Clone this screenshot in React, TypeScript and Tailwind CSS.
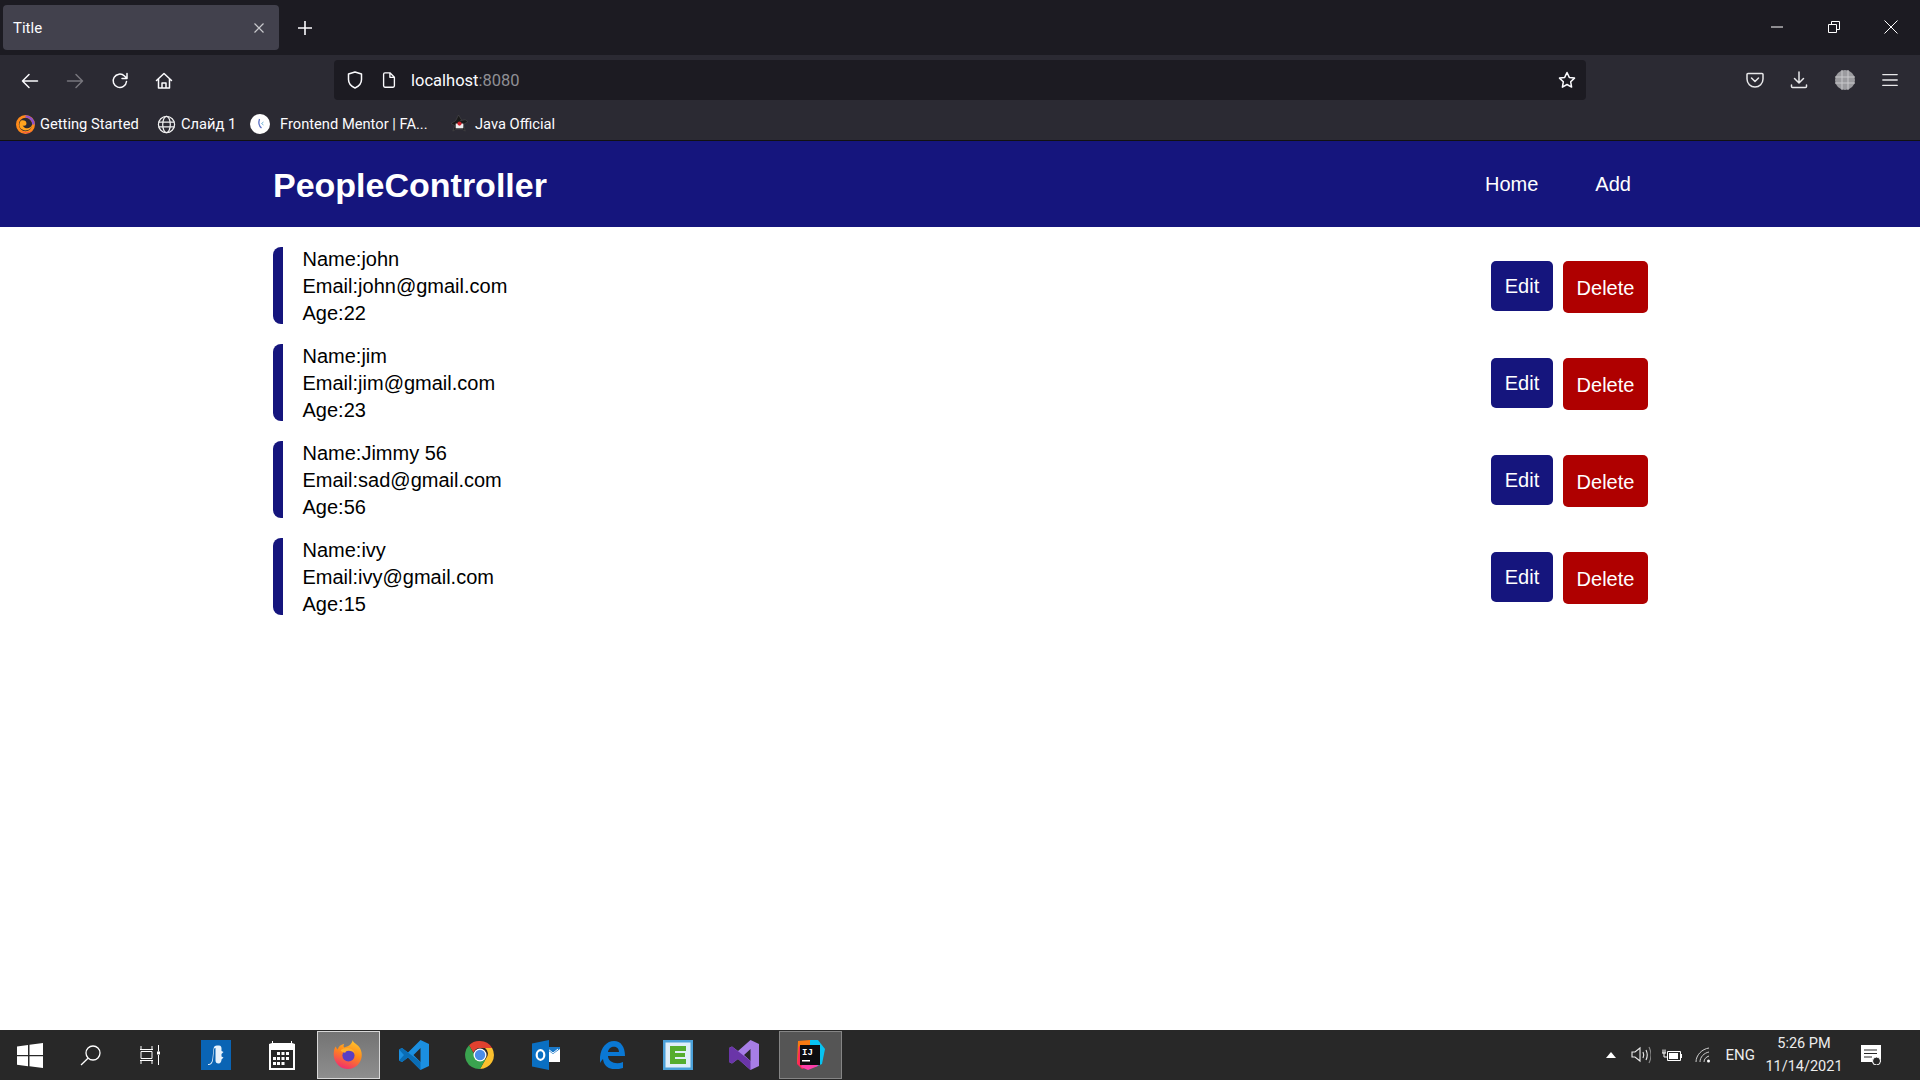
import React from "react";

const chrome = "font-['Roboto','Open_Sans',sans-serif]";

const Stroke = ({ size = 20, children, className = "" }: { size?: number; children: React.ReactNode; className?: string }) => (
  <svg width={size} height={size} viewBox="0 0 20 20" fill="none" stroke="currentColor" strokeWidth={1.5} strokeLinecap="round" strokeLinejoin="round" className={className}>
    {children}
  </svg>
);

const FirefoxIcon = ({ size = 16 }: { size?: number }) => (
  <svg width={size} height={size} viewBox="0 0 32 32">
    <defs>
      <linearGradient id={`ff${size}`} x1="0.7" y1="0" x2="0.3" y2="1">
        <stop offset="0" stopColor="#ffc52e" />
        <stop offset="0.45" stopColor="#ff8a1a" />
        <stop offset="1" stopColor="#f02a72" />
      </linearGradient>
    </defs>
    <path d="M21 0c0 3 5 4 8 9 3 6 2 13-3 18-5 5-14 5-19 1C2 24 0 18 1 12c.3-2 1-4 2-5 .5 1.500 1 2.500 2 3 1-3 3-5 7-6-1 2-1 3 0 4 4-1 8-3 9-8z" fill={`url(#ff${size})`} />
    <circle cx="16.500" cy="16.500" r="6.500" fill="#5b3fc4" />
    <path d="M8 11c3-2 6-3 10-2 3 .6 5 3 5.500 6-1.500-2.500-4-3.500-7-3.500-2 0-3 1-3.500 2-2 0-4-1-5-2.500z" fill="#ffb02e" />
  </svg>
);

const TaskSlot = ({ children, state }: { children: React.ReactNode; state?: "open" | "active" }) => (
  <div
    className={
      "w-[63px] h-[48px] mx-[1.5px] flex items-center justify-center border " +
      (state === "active"
        ? "border-[#d8d8d8] bg-gradient-to-b from-[#747474] to-[#8e8e8e]"
        : state === "open"
          ? "border-[#858585] bg-[#555555]"
          : "border-transparent")
    }
  >
    {children}
  </div>
);

const people = [
  { name: "john", email: "john@gmail.com", age: 22 },
  { name: "jim", email: "jim@gmail.com", age: 23 },
  { name: "Jimmy 56", email: "sad@gmail.com", age: 56 },
  { name: "ivy", email: "ivy@gmail.com", age: 15 },
];

function Browser() {
  return (
    <header className={`${chrome} shrink-0 text-[#fbfbfe]`}>
      <div className="h-[55px] bg-[#1c1b22] flex items-start">
        <div className="mt-[5px] ml-[3px] w-[276px] h-[45px] rounded-[4px] bg-[#42414d] flex items-center pl-[10px] pr-[14px] justify-between">
          <span className="text-[15px] pt-[1px]">Title</span>
          <svg width="12" height="12" viewBox="0 0 12 12" stroke="#c8c8cc" strokeWidth="1.2"><path d="M1.500 1.500l9 9M10.500 1.500l-9 9" /></svg>
        </div>
        <svg className="ml-[18px] mt-[20px]" width="16" height="16" viewBox="0 0 16 16" stroke="#fbfbfe" strokeWidth="1.6"><path d="M8 1v14M1 8h14" /></svg>
        <div className="ml-auto flex h-[54px] items-center">
          <div className="w-[56px] flex justify-center"><svg width="12" height="2" viewBox="0 0 12 2"><path d="M0 1h12" stroke="#fff" strokeWidth="1" /></svg></div>
          <div className="w-[57px] flex justify-center">
            <svg width="12" height="12" viewBox="0 0 12 12" fill="none" stroke="#fff" strokeWidth="1"><path d="M.5 3.500h8v8h-8zM3.500 3.500v-3h8v8h-3" /></svg>
          </div>
          <div className="w-[58px] flex justify-center">
            <svg width="14" height="14" viewBox="0 0 14 14" stroke="#fff" strokeWidth="1"><path d="M.5.5l13 13M13.500.5l-13 13" /></svg>
          </div>
        </div>
      </div>

      <div className="h-[50px] bg-[#2b2a33] flex items-center">
        <div className="flex items-center pl-[20px] text-[#fbfbfe] pt-[1px]">
          <Stroke><path d="M17.500 10h-15M9 3.500L2.500 10 9 16.500" /></Stroke>
          <Stroke className="ml-[25px] text-[#77767d]"><path d="M2.500 10h15M11 3.500l6.500 6.500L11 16.500" /></Stroke>
          <Stroke className="ml-[25px]"><path d="M16.500 10.500a6.700 6.700 0 1 1-2-5.500l2.500 2.500M17 2.500v5h-5" /></Stroke>
          <Stroke className="ml-[24px]"><path d="M2.500 9.500L10 2.500l7.500 7M4.500 8v9h11V8M8 17v-5h4v5" /></Stroke>
        </div>
        <div className="ml-[160px] w-[1252px] h-[40px] rounded-[4px] bg-[#1c1b22] flex items-center pl-[11px] pr-[9px]">
          <Stroke size={20}><path d="M10 2l6.500 2v5.500c0 4-3 7-6.500 8.500-3.500-1.500-6.500-4.500-6.500-8.500V4z" /></Stroke>
          <Stroke size={18} className="ml-[15px]"><path d="M4 3.500a1.500 1.500 0 0 1 1.500-1.500H11l5 5v9.500a1.500 1.500 0 0 1-1.500 1.500h-9A1.500 1.500 0 0 1 4 16.500zM11 2v5h5" /></Stroke>
          <span className="ml-[13px] text-[16.500px] pt-[2px] text-[#fbfbfe]">localhost<span className="text-[#8f8f94]">:8080</span></span>
          <Stroke className="ml-auto"><path d="M10 2.500l2.300 4.900 5.200.7-3.800 3.700.9 5.300-4.600-2.600-4.600 2.600.9-5.300L2.500 8.100l5.200-.7z" /></Stroke>
        </div>
        <div className="flex-1 flex items-center justify-end pr-[21px] text-[#e8e8ea]">
          <Stroke className="mr-[24px]"><path d="M3 3.500h14a1 1 0 0 1 1 1V9a8 8 0 0 1-16 0V4.500a1 1 0 0 1 1-1zM6.500 8l3.500 3.500L13.500 8" /></Stroke>
          <Stroke className="mr-[26px]"><path d="M10 2v11M5.500 8.500L10 13l4.500-4.500M2.500 15v1.500a1 1 0 0 0 1 1h13a1 1 0 0 0 1-1V15" /></Stroke>
          <svg className="mr-[26px]" width="20" height="20" viewBox="0 0 20 20">
            <circle cx="10" cy="10" r="10" fill="#9b9b9f" />
            <path d="M0 7h20M0 13h20M7 0v20M13 0v20" stroke="#c9c9cc" strokeWidth="1" />
          </svg>
          <Stroke size={18}><path d="M2 4h16M2 10h16M2 16h16" /></Stroke>
        </div>
      </div>

      <div className="h-[36px] bg-[#2b2a33] flex items-center pl-[16px] text-[14.700px] border-b border-[#111] pt-[3px]">
        <svg width="19" height="19" viewBox="0 0 20 20">
          <circle cx="10" cy="10" r="8.500" fill="none" stroke="#ff8a1a" strokeWidth="3" />
          <path d="M10 1.500A8.500 8.500 0 0 1 18.500 10" fill="none" stroke="#8b4fd0" strokeWidth="2.500" />
          <circle cx="10.500" cy="9.500" r="4.500" fill="#2b2a33" />
          <path d="M5 6c3-1 6 0 6 3 0 2-2 3-4 2 3 5 9 3 10-1 .3 6-9 9-13 3-1-2-.5-5 1-7z" fill="#ffa51f" />
          <path d="M4 15c3 4 9 5 13 1-3 4-9 5-13-1z" fill="#f0356e" />
        </svg>
        <span className="ml-[5px] w-[100px] whitespace-nowrap">Getting Started</span>
        <svg className="ml-[17px]" width="19" height="19" viewBox="0 0 20 20" fill="none" stroke="#f0f0f0" strokeWidth="1.300"><circle cx="10" cy="10" r="8.500" /><ellipse cx="10" cy="10" rx="4" ry="8.500" /><path d="M1.500 7.500h17M1.500 12.500h17" /></svg>
        <span className="ml-[5px] w-[54px] whitespace-nowrap">Слайд 1</span>
        <svg className="ml-[15px]" width="20" height="20" viewBox="0 0 20 20"><circle cx="10" cy="10" r="10" fill="#fff" /><path d="M9.500 5c-1 3-.5 7 2 9" stroke="#5a6fc4" strokeWidth="1.300" fill="none" /><path d="M13.500 8l-2 1.500 2 1.500" stroke="#7ab8d8" strokeWidth="1" fill="none" /></svg>
        <span className="ml-[10px] w-[150px] whitespace-nowrap">Frontend Mentor | FA...</span>
        <svg className="ml-[20px]" width="19" height="19" viewBox="0 0 20 20"><path d="M9 0l3 5-1 1 5-1 3 2-5 3 2 7-3-2H6l-3 2 2-6-4-2 5-3z" fill="#1a1a1a" stroke="#555" strokeWidth="0.500" /><rect x="6" y="9" width="8" height="5" fill="#eee" /><circle cx="10" cy="9" r="2.200" fill="#d0222a" /></svg>
        <span className="ml-[6px] whitespace-nowrap">Java Official</span>
      </div>
    </header>
  );
}

function Taskbar() {
  return (
    <footer className="shrink-0 h-[50px] bg-[#282828] flex items-center text-white font-['Roboto','Open_Sans',sans-serif]">
      <div className="w-[60px] flex justify-center">
        <svg width="26" height="25" viewBox="0 0 26 25" fill="#fff"><path d="M0 3.500l11-1.500v10H0zM12.500 1.800L26 0v12H12.500zM0 13.200h11v10L0 21.700zM12.500 13.200H26V25l-13.500-1.800z" /></svg>
      </div>
      <div className="w-[60px] flex justify-center">
        <svg width="21" height="21" viewBox="0 0 21 21" fill="none" stroke="#fff" strokeWidth="1.300"><circle cx="13" cy="8" r="7" /><path d="M8 13.300L1 20" /></svg>
      </div>
      <div className="w-[60px] flex justify-center">
        <svg width="21" height="20" viewBox="0 0 21 20" fill="none" stroke="#fff" strokeWidth="1"><path d="M0 4.500h13M1 1v3.500M12 1v3.500M1 6.500h11v7H1zM0 15.500h13M1 15.500V19M12 15.500V19M18.500 0v6.500M18.500 10v10" /><rect x="17" y="6.500" width="3" height="3" fill="#fff" stroke="none" /></svg>
      </div>
      <div className="w-[3px]" />
      <TaskSlot>
        <svg width="30" height="30" viewBox="0 0 30 30"><rect width="30" height="30" fill="#0a64b4" /><path d="M7 24c3 0 4-2 4.500-6l1-9c.3-2.500 1.500-3.500 3.500-3.500h2c2 0 2.500 1.500 2.500 3v2.500l2 1-2 2v2.500l2 1-2 2c0 2-1 4-3 4s-3-1-3-3V8c-1 0-1.500 .5-1.500 2L12 20c-.3 3-2 5-5 5z" fill="#e8f2fb" /></svg>
      </TaskSlot>
      <TaskSlot>
        <svg width="26" height="30" viewBox="0 0 26 30" fill="#fff"><path d="M0 4l3-1V1h1v2h18V1h1v2l3 1v26H0z" /><rect x="2" y="10" width="22" height="18" fill="#282828" /><g fill="#fff"><rect x="8" y="12" width="3" height="3" /><rect x="12.500" y="12" width="3" height="3" /><rect x="17" y="12" width="3" height="3" /><rect x="4" y="17" width="3" height="3" /><rect x="8" y="17" width="3" height="3" /><rect x="12.500" y="17" width="3" height="3" /><rect x="17" y="17" width="3" height="3" /><rect x="4" y="22" width="3" height="3" /><rect x="8" y="22" width="3" height="3" /><rect x="12.500" y="22" width="3" height="3" /></g></svg>
      </TaskSlot>
      <TaskSlot state="active"><FirefoxIcon size={30} /></TaskSlot>
      <TaskSlot>
        <svg width="30" height="30" viewBox="0 0 30 30"><path d="M21.500 0L30 4v22l-8.500 4L9 17.500 3 22l-3-1.500v-11L3 8l6 4.500zM21.500 8l-7 7 7 7z" fill="#1b8fe0" /><path d="M0 9.500L3 8l18.500 14v8L9 17.500 3 22l-3-1.500 5-5.500z" fill="#0a6db5" /></svg>
      </TaskSlot>
      <TaskSlot>
        <svg width="30" height="30" viewBox="0 0 30 30">
          <path d="M15 1a14 14 0 0 1 12.100 7H15a7 7 0 0 0-6.600 4.700L4 5.300A14 14 0 0 1 15 1z" fill="#e0412f" />
          <path d="M27.100 8A14 14 0 0 1 15 29l6-10.500A7 7 0 0 0 20 8z" fill="#fbc02d" />
          <path d="M15 29A14 14 0 0 1 4 5.300l6 10.500A7 7 0 0 0 21 18.500z" fill="#3aa34f" />
          <circle cx="15" cy="15" r="6.500" fill="#fff" /><circle cx="15" cy="15" r="5.200" fill="#4a8de8" />
        </svg>
      </TaskSlot>
      <TaskSlot>
        <svg width="28" height="30" viewBox="0 0 28 30"><rect x="14" y="7" width="14" height="15" fill="#fff" /><path d="M14 9l7 5 7-5v-2H14z" fill="#1a78c8" /><path d="M16 9l5 4 5-4" fill="none" stroke="#fff" strokeWidth="1" /><path d="M0 3.500L17 0v30L0 26.500z" fill="#0a6fc2" /><ellipse cx="8.500" cy="15" rx="3.800" ry="4.800" fill="none" stroke="#fff" strokeWidth="2.200" /></svg>
      </TaskSlot>
      <TaskSlot>
        <svg width="26" height="28" viewBox="0 0 26 28"><path d="M1 16C2 6 8 0 15 0c7 0 11 6 11 15H9c0 6 8 9 15 6v6c-9 3-19 1-20-9-1 1-2 2-3 4zM9 11h11c0-7-10-7-11 0z" fill="#0a78d4" /></svg>
      </TaskSlot>
      <TaskSlot>
        <svg width="30" height="30" viewBox="0 0 30 30"><rect width="30" height="30" fill="#4ba0d8" /><rect x="2.500" y="2.500" width="25" height="25" fill="#dfeef8" /><path d="M7 6h16v5H12v2h10v4H12v2h11v5H7z" fill="#55ad2e" /></svg>
      </TaskSlot>
      <TaskSlot>
        <svg width="30" height="30" viewBox="0 0 30 30"><path d="M21.500 0L30 4v22l-8.500 4L9 19l-6 4.500-3-1.500V8l3-1.500L9 11zM21.500 9l-6.500 6 6.500 6zM3 11v8l4-4z" fill="#a77ee6" /><path d="M0 8l3-1.500L21.500 21v9L9 19l-6 4.500L0 22z" fill="#6a35a8" /></svg>
      </TaskSlot>
      <TaskSlot state="open">
        <svg width="30" height="30" viewBox="0 0 30 30">
          <path d="M3 1l12-1 4 7-13 12-4 5z" fill="#f97a12" />
          <path d="M2 24L4 6l10 8 1 12-8 3z" fill="#fe2857" />
          <path d="M15 0h8l7 9-3 15-7 3-5-10z" fill="#07c3f2" />
          <path d="M6 27l8-18 9 17-10 4z" fill="#fc3ea8" />
          <rect x="5" y="5" width="20" height="20" fill="#0c0c0f" />
          <text x="7" y="15" fontSize="9" fontWeight="700" fill="#fff" fontFamily="'Liberation Mono',monospace">IJ</text>
          <rect x="7" y="20" width="8" height="1.500" fill="#fff" />
        </svg>
      </TaskSlot>

      <div className="ml-auto flex items-center h-full">
        <svg width="10" height="6" viewBox="0 0 10 6" fill="#fff"><path d="M5 0l5 6H0z" /></svg>
        <svg className="ml-[15px]" width="20" height="18" viewBox="0 0 20 18" fill="none" stroke="#ececec" strokeWidth="1.100"><path d="M1 6h3l5-4v13l-5-4H1zM12 6c1 2 1 4 0 6M15 4c1.500 3 1.500 7 0 10" /><path d="M18 1c2.500 5 2.500 11 0 16" stroke="#888" /></svg>
        <svg className="ml-[11px]" width="20" height="14" viewBox="0 0 20 14" fill="none" stroke="#fff" strokeWidth="1"><path d="M5.500 3.500h13v9h-13z" /><rect x="7" y="5" width="9" height="6" fill="#fff" stroke="none" /><rect x="19" y="6" width="1" height="4" fill="#fff" stroke="none" /><path d="M0 5h4M1 1.500V5M3 1.500V5M2 5v4h3" /></svg>
        <svg className="ml-[13px]" width="17" height="16" viewBox="0 0 17 16" fill="none" stroke="#cfcfcf" strokeWidth="1"><path d="M1 15C1 8 7 2 14 1M5 15c0-5 4-9 9-10M9 15c0-3 2-5 5-6" /><circle cx="13.500" cy="14" r="1.500" fill="#fff" stroke="none" /></svg>
        <span className="ml-[14px] text-[15px] text-[#ececec]">ENG</span>
        <div className="w-[98px] flex flex-col items-center text-[14.500px] leading-[23px] text-[#ececec]">
          <span>5:26 PM</span>
          <span>11/14/2021</span>
        </div>
        <svg className="ml-[8px] mr-[39px]" width="20" height="20" viewBox="0 0 20 20"><path d="M0 0h20v17h-5l-2 3-2-3H0z" fill="#fff" /><path d="M3 5h13M3 8.500h13M3 12h8" stroke="#282828" strokeWidth="1.100" /><circle cx="15.500" cy="16" r="4" fill="#282828" stroke="#fff" strokeWidth="1" /></svg>
      </div>
    </footer>
  );
}

export default function App() {
  return (
    <div className="w-[1920px] h-[1080px] flex flex-col bg-white overflow-hidden font-['Liberation_Sans',Arial,sans-serif]">
      <Browser />
      <nav className="shrink-0 h-[86px] bg-[#15157d] flex items-start pl-[273px] text-white">
        <h1 className="text-[34px] font-bold leading-[40px] mt-[24px]">PeopleController</h1>
        <a className="text-[20px] leading-[23px] ml-[938px] mt-[32px]">Home</a>
        <a className="text-[20px] leading-[23px] ml-[57px] mt-[32px]">Add</a>
      </nav>
      <main className="flex-1 pl-[273px] pr-[272px] pt-[20px] flex flex-col gap-[20px]">
        {people.map((p) => (
          <div key={p.email} className="h-[77px] flex items-start">
            <div className="w-[10px] h-[77px] rounded-l-[8px] bg-[#15157d]" />
            <div className="ml-[19.500px] -mt-[1px] text-[20px] leading-[27px] text-black">
              <div>Name:{p.name}</div>
              <div>Email:{p.email}</div>
              <div>Age:{p.age}</div>
            </div>
            <div className="ml-auto mt-[14px] flex items-start gap-[10px]">
              <button className="w-[62px] h-[50px] rounded-[5px] bg-[#15157d] text-white text-[20px]">Edit</button>
              <button className="w-[85px] h-[52px] pt-[2px] rounded-[5px] bg-[#af0000] text-white text-[20px]">Delete</button>
            </div>
          </div>
        ))}
      </main>
      <Taskbar />
    </div>
  );
}
